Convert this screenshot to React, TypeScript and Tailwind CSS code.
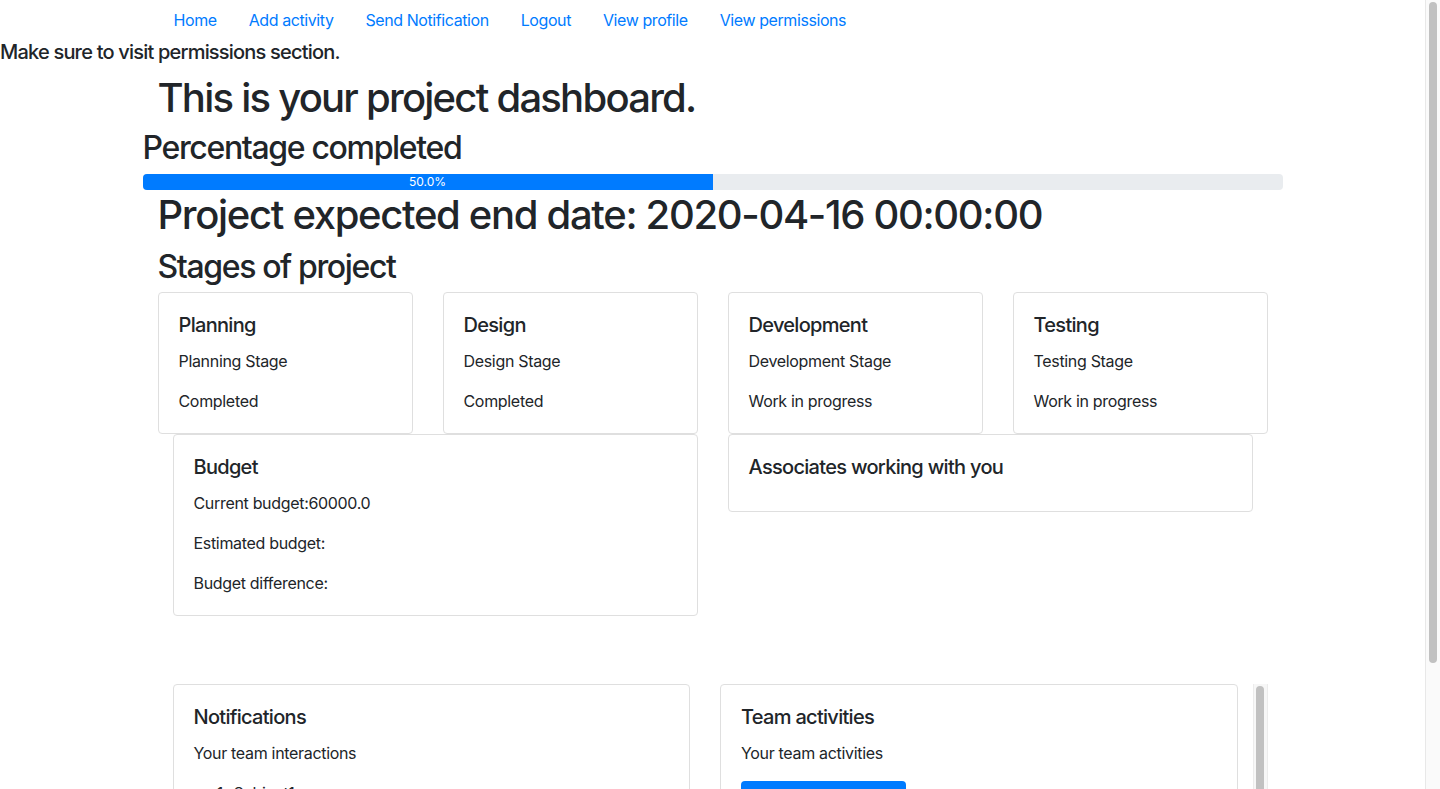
import React from 'react';

const stages = [
  { title: 'Planning', text: 'Planning Stage', status: 'Completed' },
  { title: 'Design', text: 'Design Stage', status: 'Completed' },
  { title: 'Development', text: 'Development Stage', status: 'Work in progress' },
  { title: 'Testing', text: 'Testing Stage', status: 'Work in progress' },
];

const links = ['Home', 'Add activity', 'Send Notification', 'Logout', 'View profile', 'View permissions'];

function Card({ className = '', children }: { className?: string; children: React.ReactNode }) {
  return (
    <div className={`border border-[#dfdfdf] rounded-[4px] bg-white p-5 ${className}`}>{children}</div>
  );
}

function CardTitle({ children }: { children: React.ReactNode }) {
  return <h5 className="text-[20px] leading-[24px] font-medium tracking-[-0.035em] mb-3">{children}</h5>;
}

export default function App() {
  return (
    <div className="flex w-[1440px] h-[789px] overflow-hidden bg-white text-[#212529] text-[16px] leading-6 tracking-[-0.02em] font-['Inter','Liberation_Sans',sans-serif]">
      <div className="flex-1 min-w-0">
        {/* top nav */}
        <nav className="w-[1140px] mx-auto px-[15px]">
          <ul className="flex tracking-[-0.026em]">
            {links.map((l) => (
              <li key={l}>
                <a href="#" className="block px-4 py-2 text-[#007bff]">
                  {l}
                </a>
              </li>
            ))}
          </ul>
        </nav>

        <h5 className="text-[20px] leading-[24px] font-medium tracking-[-0.04em] mb-2">
          Make sure to visit permissions section.
        </h5>

        <div className="w-[1140px] mx-auto px-[15px]">
          <h1 className="pt-[2px] text-[40px] leading-[48px] font-medium tracking-[-0.044em] mb-[6px]">
            This is your project dashboard.
          </h1>
          <h2 className="-mx-[15px] pt-[1px] text-[32px] leading-[38px] font-medium tracking-[-0.042em] mb-[7px]">
            Percentage completed
          </h2>
          <div className="-mx-[15px] h-4 bg-[#e9ecef] rounded-[4px] overflow-hidden flex text-[12px] leading-4 tracking-normal">
            <div className="w-1/2 bg-[#007bff] text-white flex items-center justify-center">50.0%</div>
          </div>
          <h1 className="pt-[1px] text-[40px] leading-[48px] font-medium tracking-[-0.033em] mb-[7px]">
            Project expected end date: 2020-04-16 00:00:00
          </h1>
          <h2 className="pt-[2px] text-[32px] leading-[38px] font-medium tracking-[-0.043em] mb-[6px]">
            Stages of project
          </h2>

          {/* stages */}
          <div className="grid grid-cols-4 gap-[30px]">
            {stages.map((s) => (
              <Card key={s.title}>
                <CardTitle>{s.title}</CardTitle>
                <p className="mb-4">{s.text}</p>
                <p>{s.status}</p>
              </Card>
            ))}
          </div>

          {/* budget + associates */}
          <div className="flex items-start gap-[30px] pl-[15px]">
            <Card className="w-[525px]">
              <CardTitle>Budget</CardTitle>
              <p className="mb-4">Current budget:60000.0</p>
              <p className="mb-4">Estimated budget:</p>
              <p>Budget difference:</p>
            </Card>
            <Card className="w-[525px]">
              <CardTitle>Associates working with you</CardTitle>
            </Card>
          </div>

          {/* notifications + activities */}
          <div className="mt-[68px] flex items-start">
            <div className="pl-[15px]">
              <Card className="w-[517px]">
                <CardTitle>Notifications</CardTitle>
                <p className="mb-4">Your team interactions</p>
                <ol className="list-decimal pl-10">
                  <li>Subject1</li>
                  <li>Subject2</li>
                </ol>
              </Card>
            </div>
            <div className="flex-1 flex ml-[30.5px]">
              <Card className="flex-1">
                <CardTitle>Team activities</CardTitle>
                <p className="mb-4">Your team activities</p>
                <button className="w-[165px] bg-[#007bff] text-white rounded-[4px] px-3 py-1.5 leading-6">
                  View activities
                </button>
              </Card>
              <div className="ml-[15px] w-[15px] h-[200px] bg-[#f7f7f7] border-x border-[#ececec] flex justify-center pt-[2px]">
                <div className="w-[8px] h-[190px] rounded-full bg-[#c1c1c1]" />
              </div>
            </div>
          </div>
        </div>
      </div>

      {/* page scrollbar */}
      <div className="w-[15px] h-full bg-[#fafafa] border-l border-[#e8e8e8] flex justify-center pt-[2px]">
        <div className="w-[8px] h-[661px] rounded-full bg-[#c1c1c1]" />
      </div>
    </div>
  );
}
